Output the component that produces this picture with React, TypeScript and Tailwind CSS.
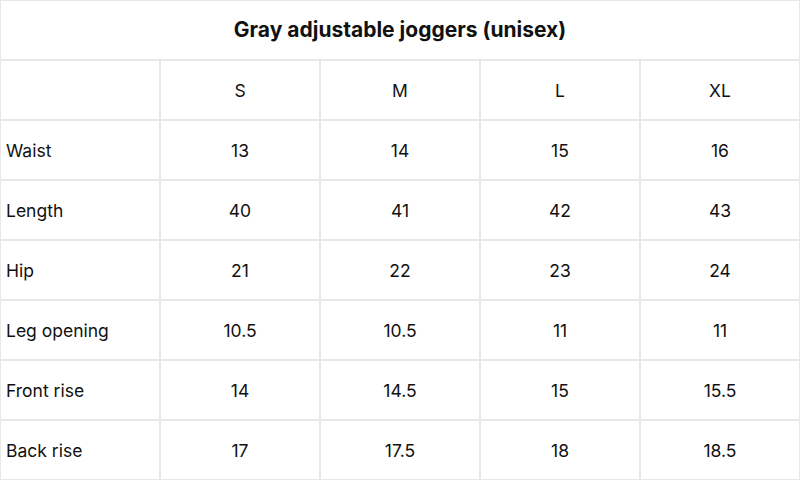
const sizes = ["S", "M", "L", "XL"];

const rows: { label: string; values: string[] }[] = [
  { label: "Waist", values: ["13", "14", "15", "16"] },
  { label: "Length", values: ["40", "41", "42", "43"] },
  { label: "Hip", values: ["21", "22", "23", "24"] },
  { label: "Leg opening", values: ["10.5", "10.5", "11", "11"] },
  { label: "Front rise", values: ["14", "14.5", "15", "15.5"] },
  { label: "Back rise", values: ["17", "17.5", "18", "18.5"] },
];

export default function App() {
  return (
    <div
      className="w-[800px] h-[480px] bg-[#e8e8e8] p-[1px] grid grid-cols-5 grid-rows-8 gap-[2px] text-[#111111]"
      style={{ fontFamily: "Inter, 'Noto Sans', sans-serif" }}
    >
      {/* Title */}
      <div className="col-span-5 bg-white flex items-center justify-center text-[21px] font-bold">
        Gray adjustable joggers (unisex)
      </div>

      {/* Size header */}
      <div className="bg-white" />
      {sizes.map((s) => (
        <div key={s} className="bg-white flex items-center justify-center pt-[3px] text-[17.5px]">
          {s}
        </div>
      ))}

      {rows.map((r) => (
        <>
          <div key={r.label} className="bg-white flex items-center pl-[5px] pt-[3px] text-[17.5px]">
            {r.label}
          </div>
          {r.values.map((v, i) => (
            <div key={r.label + i} className="bg-white flex items-center justify-center pt-[3px] text-[17.5px]">
              {v}
            </div>
          ))}
        </>
      ))}
    </div>
  );
}
